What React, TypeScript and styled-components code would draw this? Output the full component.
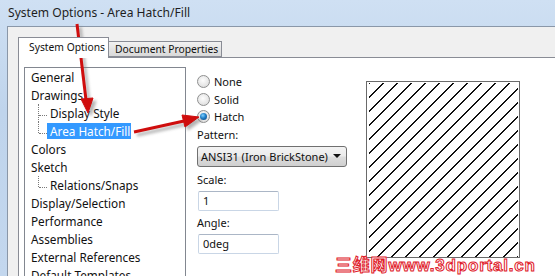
import React from "react";
import styled, { createGlobalStyle } from "styled-components";

const GlobalStyle = createGlobalStyle`
  html, body {
    margin: 0;
    padding: 0;
    overflow: hidden;
  }
  body {
    font-family: "Noto Sans", "Open Sans", sans-serif;
  }
`;

const treeItems: { label: string; child?: boolean; last?: boolean; selected?: boolean }[] = [
  { label: "General" },
  { label: "Drawings" },
  { label: "Display Style", child: true },
  { label: "Area Hatch/Fill", child: true, last: true, selected: true },
  { label: "Colors" },
  { label: "Sketch" },
  { label: "Relations/Snaps", child: true, last: true },
  { label: "Display/Selection" },
  { label: "Performance" },
  { label: "Assemblies" },
  { label: "External References" },
  { label: "Default Templates" },
];

const Hatch = () => {
  const lines = [];
  for (let k = 0; k < 26; k++) {
    const c = 3.5 + 14 * k;
    lines.push(<line key={k} x1={c - 200} y1={200} x2={c} y2={0} />);
  }
  return (
    <svg width="152" height="175" viewBox="0 0 152 175">
      <defs>
        <clipPath id="hatchClip">
          <rect x="2" y="1" width="149" height="174" />
        </clipPath>
      </defs>
      <g clipPath="url(#hatchClip)" stroke="#111" strokeWidth="1" shapeRendering="crispEdges">
        {lines}
      </g>
    </svg>
  );
};

const Arrows = () => (
  <ArrowLayer width="555" height="276" viewBox="0 0 555 276">
    <defs>
      <filter id="shadow" x="-20%" y="-20%" width="140%" height="140%">
        <feGaussianBlur stdDeviation="1.5" />
      </filter>
    </defs>
    <g fill="#777" stroke="#777" opacity="0.55" filter="url(#shadow)" transform="translate(3 3)">
      <line x1="77" y1="24" x2="86" y2="100" strokeWidth="3" />
      <polygon points="88,113 81,99 93,98" />
      <line x1="134" y1="132" x2="184" y2="121" strokeWidth="3" />
      <polygon points="199,117 182,115 185,127" />
    </g>
    <g fill="#cf0d0d" stroke="#cf0d0d">
      <line x1="77" y1="24" x2="86" y2="100" strokeWidth="3" />
      <polygon points="88,113 81,99 93,98" />
      <line x1="134" y1="132" x2="184" y2="121" strokeWidth="3" />
      <polygon points="199,117 182,115 185,127" />
    </g>
  </ArrowLayer>
);

const App = () => {
  return (
    <>
      <GlobalStyle />
      <Window>
        <TitleBar>System Options - Area Hatch/Fill</TitleBar>
        <Client>
          <TabRow>
            <Tab active>System Options</Tab>
            <Tab>Document Properties</Tab>
          </TabRow>
          <Panel>
            <TreeBox>
              {treeItems.map((item) => (
                <TreeRow key={item.label} child={item.child} last={item.last}>
                  <TreeLabel selected={item.selected}>{item.label}</TreeLabel>
                </TreeRow>
              ))}
            </TreeBox>
            <Options>
              <RadioRow>
                <Radio />
                None
              </RadioRow>
              <RadioRow>
                <Radio />
                Solid
              </RadioRow>
              <RadioRow>
                <Radio checked />
                Hatch
              </RadioRow>
              <FieldLabel top={0}>Pattern:</FieldLabel>
              <Combo>
                ANSI31 (Iron BrickStone)
                <ComboArrow />
              </Combo>
              <FieldLabel top={4}>Scale:</FieldLabel>
              <TextBox>1</TextBox>
              <FieldLabel top={3}>Angle:</FieldLabel>
              <TextBox>0deg</TextBox>
            </Options>
            <Preview>
              <Hatch />
            </Preview>
          </Panel>
        </Client>
        <Arrows />
        <Watermark>三维网www.3dportal.cn</Watermark>
      </Window>
    </>
  );
};

export default App;

const Window = styled.div`
  position: relative;
  width: 555px;
  height: 276px;
  overflow: hidden;
  background: linear-gradient(180deg, #cfe0f3 0%, #bfd4ec 40%, #c3d7ee 100%);
  display: flex;
  flex-direction: column;
`;

const TitleBar = styled.div`
  height: 26px;
  flex: none;
  padding-left: 8px;
  line-height: 25px;
  font-size: 12.1px;
  color: #1e1e1e;
`;

const Client = styled.div`
  flex: 1;
  margin-left: 7px;
  border-left: 1px solid #8a97a8;
  border-top: 1px solid #8a97a8;
  background: #f0f0f0;
  padding: 10px 0 0 10px;
  display: flex;
  flex-direction: column;
  min-height: 0;
`;

const TabRow = styled.div`
  display: flex;
  align-items: flex-end;
  height: 20px;
  position: relative;
  z-index: 1;
`;

const Tab = styled.div<{ active?: boolean }>`
  box-sizing: border-box;
  height: ${(p) => (p.active ? 21 : 16)}px;
  margin-bottom: ${(p) => (p.active ? -1 : 0)}px;
  padding: ${(p) => (p.active ? "0 3px 0 10px" : "0 3px 0 6px")};
  border: 1px solid #898c95;
  border-bottom: ${(p) => (p.active ? "none" : "1px solid #898c95")};
  border-left: ${(p) => (p.active ? "1px solid #898c95" : "none")};
  background: ${(p) => (p.active ? "#ffffff" : "linear-gradient(180deg, #f2f2f2 0%, #e4e4e4 50%, #d9d9d9 100%)")};
  font-size: 10.3px;
  line-height: ${(p) => (p.active ? 19 : 14)}px;
  color: #111;
  white-space: nowrap;
`;

const Panel = styled.div`
  flex: 1;
  background: #ffffff;
  border-top: 1px solid #898c95;
  border-left: 1px solid #898c95;
  padding: 9px 0 0 5px;
  display: flex;
  align-items: flex-start;
  min-height: 0;
`;

const TreeBox = styled.div`
  box-sizing: border-box;
  width: 162px;
  height: 230px;
  flex: none;
  border: 1px solid #828790;
  padding: 0 0 0 5px;
  background: #fff;
`;

const TreeRow = styled.div<{ child?: boolean; last?: boolean }>`
  position: relative;
  height: 18px;
  padding-left: ${(p) => (p.child ? 19 : 0)}px;
  display: flex;
  align-items: center;

  &::before {
    content: "";
    display: ${(p) => (p.child ? "block" : "none")};
    position: absolute;
    left: 8px;
    top: 0;
    height: ${(p) => (p.last ? 11 : 18)}px;
    border-left: 1px dotted #7a7a7a;
  }

  &::after {
    content: "";
    display: ${(p) => (p.child ? "block" : "none")};
    position: absolute;
    left: 9px;
    top: 11px;
    width: 8px;
    border-top: 1px dotted #7a7a7a;
  }
`;

const TreeLabel = styled.span<{ selected?: boolean }>`
  font-size: 11.75px;
  line-height: 16px;
  margin-left: ${(p) => (p.selected ? -2 : 0)}px;
  padding: 0 1px 0 ${(p) => (p.selected ? 3 : 1)}px;
  background: ${(p) => (p.selected ? "#3399ff" : "transparent")};
  color: ${(p) => (p.selected ? "#ffffff" : "#111")};
  white-space: nowrap;
`;

const Options = styled.div`
  width: 150px;
  flex: none;
  margin-left: 11px;
  padding-top: 6px;
  display: flex;
  flex-direction: column;
  font-size: 11px;
  color: #111;
`;

const RadioRow = styled.div`
  height: 17.5px;
  display: flex;
  align-items: center;
  gap: 4px;
`;

const Radio = styled.span<{ checked?: boolean }>`
  box-sizing: border-box;
  width: 13px;
  height: 13px;
  border-radius: 50%;
  border: 1px solid #8e8f8f;
  background: radial-gradient(circle at 45% 40%, #fdfdfd 0%, #e8e8e8 55%, #d4d4d4 100%);
  display: flex;
  align-items: center;
  justify-content: center;

  &::after {
    content: "";
    display: ${(p) => (p.checked ? "block" : "none")};
    width: 7px;
    height: 7px;
    border-radius: 50%;
    background: radial-gradient(circle at 40% 35%, #7fd0ff 0%, #1f7fc8 45%, #0d3c74 100%);
  }
`;

const FieldLabel = styled.div<{ top: number }>`
  margin-top: ${(p) => p.top}px;
  height: 18px;
  line-height: 18px;
`;

const Combo = styled.div`
  box-sizing: border-box;
  margin-top: 2px;
  height: 21px;
  width: 150px;
  border: 1px solid #707070;
  border-radius: 3px;
  background: linear-gradient(180deg, #f3f3f3 0%, #ebebeb 48%, #dddddd 52%, #cfcfcf 100%);
  padding: 0 0 0 3px;
  display: flex;
  align-items: center;
  justify-content: space-between;
  white-space: nowrap;
`;

const ComboArrow = styled.span`
  width: 0;
  height: 0;
  margin-right: 5px;
  border-left: 4px solid transparent;
  border-right: 4px solid transparent;
  border-top: 4px solid #111;
`;

const TextBox = styled.div`
  box-sizing: border-box;
  margin-top: 2px;
  margin-left: 1px;
  width: 81px;
  height: 20px;
  border: 1px solid #c9d6e6;
  border-top-color: #abb6c6;
  border-radius: 2px;
  padding-left: 4px;
  line-height: 18px;
  background: #fff;
`;

const Preview = styled.div`
  box-sizing: border-box;
  margin-left: 19px;
  margin-top: 14px;
  width: 154px;
  height: 177px;
  flex: none;
  border: 1px solid #6a6a6a;
  display: flex;
`;

const ArrowLayer = styled.svg`
  position: absolute;
  left: 0;
  top: 0;
  pointer-events: none;
`;

const Watermark = styled.div`
  position: absolute;
  left: 335px;
  top: 256px;
  font-family: "Liberation Sans", "Noto Sans CJK SC", sans-serif;
  font-weight: bold;
  font-size: 17px;
  line-height: 20px;
  color: #ffffff;
  -webkit-text-stroke: 1px #e0202a;
  letter-spacing: 0.8px;
  white-space: nowrap;
`;
